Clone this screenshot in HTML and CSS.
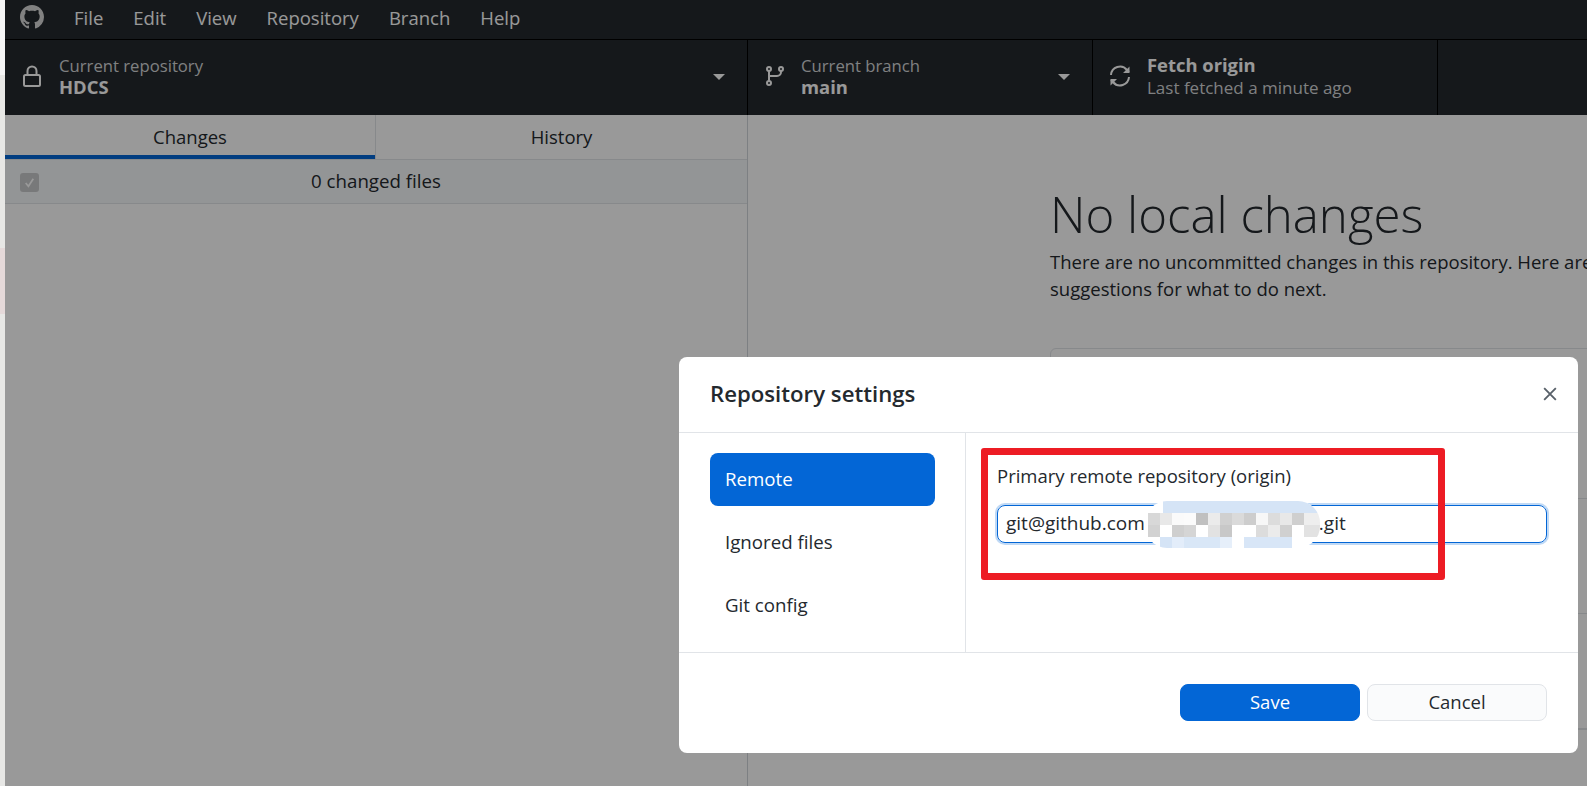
FILE: index.html
```html
<!DOCTYPE html>
<html lang="en">
<head>
<meta charset="utf-8">
<title>GitHub Desktop</title>
<link rel="stylesheet" href="styles.css">
</head>
<body>
<div class="strip"><div class="strip-pink"></div></div>
<div class="app">
  <header class="titlebar">
    <svg class="logo" viewBox="0 0 16 16"><path fill="currentColor" d="M8 0C3.58 0 0 3.58 0 8c0 3.54 2.29 6.53 5.47 7.59.4.07.55-.17.55-.38 0-.19-.01-.82-.01-1.49-2.01.37-2.53-.49-2.69-.94-.09-.23-.48-.94-.82-1.13-.28-.15-.68-.52-.01-.53.63-.01 1.08.58 1.23.82.72 1.21 1.87.87 2.33.66.07-.52.28-.87.51-1.07-1.78-.2-3.64-.89-3.64-3.95 0-.87.31-1.59.82-2.15-.08-.2-.36-1.02.08-2.12 0 0 .67-.21 2.2.82.64-.18 1.32-.27 2-.27s1.36.09 2 .27c1.53-1.04 2.2-.82 2.2-.82.44 1.1.16 1.92.08 2.12.51.56.82 1.27.82 2.15 0 3.07-1.87 3.75-3.65 3.95.29.25.54.73.54 1.48 0 1.07-.01 1.93-.01 2.2 0 .21.15.46.55.38A8.01 8.01 0 0 0 16 8c0-4.42-3.58-8-8-8z"/></svg>
    <nav class="menu">
      <span>File</span><span>Edit</span><span>View</span><span>Repository</span><span>Branch</span><span>Help</span>
    </nav>
  </header>
  <div class="toolbar">
    <div class="tool tool-repo">
      <svg class="ico ico-lock" viewBox="0 0 18 22" fill="none" stroke="currentColor" stroke-width="2"><rect x="1" y="10" width="16" height="11" rx="1.5"/><path d="M4.5 10V6a4.5 4.5 0 0 1 9 0v4"/></svg>
      <div class="tool-text"><div class="tool-sub">Current repository</div><div class="tool-main">HDCS</div></div>
      <i class="caret"></i>
    </div>
    <div class="tool tool-branch">
      <svg class="ico ico-branch" viewBox="0 0 18 20" fill="none" stroke="currentColor" stroke-width="2"><circle cx="3" cy="3" r="2"/><circle cx="15" cy="3" r="2"/><circle cx="3" cy="17" r="2"/><path d="M3 5v10M15 5v1a4 4 0 0 1-4 4H3"/></svg>
      <div class="tool-text"><div class="tool-sub">Current branch</div><div class="tool-main">main</div></div>
      <i class="caret"></i>
    </div>
    <div class="tool tool-fetch">
      <svg class="ico ico-sync" viewBox="0 0 22 22" fill="none" stroke="currentColor" stroke-width="2"><path d="M2 10a9 9 0 0 1 16-5l2 2"/><path d="M20 12a9 9 0 0 1-16 5l-2-2"/><path d="M20.500 1.500v6.500h-6.500M1.500 20.500v-6.500h6.500" fill="currentColor" stroke="none"/></svg>
      <div class="tool-text"><div class="tool-main">Fetch origin</div><div class="tool-sub tool-sub-last">Last fetched a minute ago</div></div>
    </div>
  </div>
  <main class="content">
    <aside class="left">
      <div class="tabs">
        <div class="tab tab-on">Changes</div>
        <div class="tab">History</div>
      </div>
      <div class="files">
        <span class="check"><svg viewBox="0 0 12 12"><path d="M2.500 6.500l2.500 3 4.500-7" fill="none" stroke="currentColor" stroke-width="1.600"/></svg></span>
        <span class="files-label">0 changed files</span>
      </div>
    </aside>
    <section class="right">
      <h1>No local changes</h1>
      <p>There are no uncommitted changes in this repository. Here are<br>suggestions for what to do next.</p>
      <div class="card"><div class="card-row card-row-first"></div><div class="card-row"></div><div class="card-row"></div></div>
    </section>
  </main>
</div>
<div class="scrim"></div>
<div class="dialog">
  <div class="dialog-head">
    <h2>Repository settings</h2>
    <svg class="close" viewBox="0 0 12 12"><path d="M1 1l10 10M11 1L1 11" stroke="currentColor" stroke-width="1.600" fill="none"/></svg>
  </div>
  <div class="dialog-body">
    <ul class="side">
      <li class="side-on">Remote</li>
      <li>Ignored files</li>
      <li>Git config</li>
    </ul>
    <div class="pane">
      <label class="field-label">Primary remote repository (origin)</label>
      <div class="input">git@github.com<span class="input-gap"></span>.git</div>
    </div>
  </div>
  <div class="dialog-foot">
    <button class="btn btn-save">Save</button>
    <button class="btn btn-cancel">Cancel</button>
  </div>
  <div class="redbox"></div>
  <svg class="mosaic" viewBox="0 0 180 48" shape-rendering="crispEdges">
    <defs><clipPath id="pill"><rect x="0" y="0" width="175" height="47" rx="22"/></clipPath></defs>
    <g clip-path="url(#pill)">
      <rect width="180" height="48" fill="#fff"/>
      <rect x="18" y="0" width="160" height="12" fill="#d5e4f6"/>
      <rect x="3" y="12" width="12" height="12" fill="#d8d8d8"/><rect x="15" y="12" width="12" height="12" fill="#e8e8e8"/><rect x="27" y="12" width="12" height="12" fill="#fafafa"/><rect x="39" y="12" width="12" height="12" fill="#fbfbfb"/><rect x="51" y="12" width="12" height="12" fill="#c0c0c0"/><rect x="63" y="12" width="12" height="12" fill="#ebebeb"/><rect x="75" y="12" width="12" height="12" fill="#d0d0d0"/><rect x="87" y="12" width="12" height="12" fill="#dadada"/><rect x="99" y="12" width="12" height="12" fill="#cdcdcd"/><rect x="111" y="12" width="12" height="12" fill="#f7f7f7"/><rect x="123" y="12" width="12" height="12" fill="#dcdcdc"/><rect x="135" y="12" width="12" height="12" fill="#e8e8e8"/><rect x="147" y="12" width="12" height="12" fill="#cfcfcf"/><rect x="159" y="12" width="19" height="12" fill="#eeeeee"/>
      <rect x="3" y="24" width="12" height="12" fill="#d2d2d2"/><rect x="27" y="24" width="12" height="12" fill="#cfcfcf"/><rect x="39" y="24" width="12" height="12" fill="#d5d5d5"/><rect x="63" y="24" width="12" height="12" fill="#e2e2e2"/><rect x="75" y="24" width="12" height="12" fill="#c8c8c8"/><rect x="111" y="24" width="12" height="12" fill="#dcdcdc"/><rect x="123" y="24" width="12" height="12" fill="#ebebeb"/><rect x="135" y="24" width="12" height="12" fill="#d0d0d0"/><rect x="159" y="24" width="19" height="12" fill="#e2e2e2"/>
      <rect x="15" y="36" width="12" height="12" fill="#d5e4f6"/><rect x="27" y="36" width="12" height="12" fill="#e3edfa"/><rect x="39" y="36" width="36" height="12" fill="#d9e7f7"/><rect x="75" y="36" width="12" height="12" fill="#e6effa"/><rect x="99" y="36" width="48" height="12" fill="#d8e6f7"/>
    </g>
  </svg>
</div>
</body>
</html>
```
FILE: styles.css
```css
* { box-sizing: border-box; }
html, body { margin: 0; height: 100%; overflow: hidden; }
body { font-family: "Open Sans", "Noto Sans", sans-serif; background: #fff; position: relative; }
.strip { position: absolute; left: 0; top: 0; bottom: 0; width: 5px; background: linear-gradient(#f5f5f5 0, #f5f5f5 75px, #e7e7e5 75px); }
.strip-pink { position: absolute; left: 0; right: 0; top: 248px; height: 66px; background: #e5d9d9; }
.app { margin-left: 5px; height: 786px; display: flex; flex-direction: column; background: #fff; }
.titlebar { height: 40px; background: #24292e; border-bottom: 1px solid #000; display: flex; align-items: center; color: #fff; padding: 0 0 5px 15px; flex: none; }
.logo { width: 24px; height: 24px; color: #d8d8d8; }
.menu { display: flex; margin-left: 30px; font-size: 18.500px; color: #fff; gap: 30px; }
.toolbar { height: 75px; background: #24292e; display: flex; flex: none; color: #fff; }
.tool { height: 75px; display: flex; align-items: center; border-right: 1px solid #000; position: relative; flex: none; padding-bottom: 4px; }
.tool-repo { width: 743px; padding-left: 18px; }
.tool-branch { width: 345px; padding-left: 18px; }
.tool-fetch { width: 345px; padding-left: 16px; }
.ico { color: #fff; flex: none; }
.ico-lock { width: 18px; height: 22px; margin-right: 18px; }
.ico-branch { width: 18px; height: 20px; margin-right: 17px; }
.ico-sync { width: 22px; height: 22px; margin-right: 16px; }
.tool-text { display: flex; flex-direction: column; line-height: 21px; }
.tool-sub { color: #d4d6d8; font-size: 16.700px; }
.tool-sub-last { font-size: 17px; margin-top: 2px; }
.tool-main { font-weight: 700; color: #fff; font-size: 18.400px; }
.caret { position: absolute; right: 22px; top: 34px; width: 0; height: 0; border-left: 6px solid transparent; border-right: 6px solid transparent; border-top: 6px solid #fff; }
.content { flex: 1; display: flex; min-height: 0; }
.left { width: 743px; border-right: 1px solid #d1d5da; flex: none; background: #fff; }
.tabs { display: flex; height: 45px; border-bottom: 1px solid #e1e4e8; }
.tab { flex: 1; display: flex; align-items: center; justify-content: center; font-size: 18.500px; color: #24292e; border-left: 1px solid #e1e4e8; padding-bottom: 1px; }
.tab-on { flex: none; width: 370px; border-left: none; border-bottom: 4px solid #0366d6; height: 44px; padding: 2px 0 0; }
.files { height: 44px; display: flex; align-items: center; position: relative; background: #f6f8fa; border-bottom: 1px solid #e1e4e8; justify-content: center; font-size: 18.700px; color: #24292e; padding-bottom: 2px; }
.check { position: absolute; left: 15px; top: 13px; width: 19px; height: 19px; background: #c8cacc; border-radius: 3px; color: #fff; display: flex; padding: 3px; }
.right { flex: 1; padding: 66px 0 0 302px; background: #fff; color: #24292e; overflow: hidden; }
.right h1 { margin: 0; font-size: 49.200px; font-weight: 300; line-height: 66px; white-space: nowrap; }
.right p { margin: 1px 0 0; font-size: 18.500px; line-height: 27px; white-space: nowrap; }
.card { margin-top: 46px; width: 700px; height: 382px; border: 1px solid #e1e4e8; border-radius: 6px; }
.card-row { height: 115px; border-bottom: 1px solid #e1e4e8; }
.card-row-first { height: 150px; }
.scrim { position: absolute; left: 5px; top: 0; right: 0; bottom: 0; background: rgba(0,0,0,.4); }
.dialog { position: absolute; left: 679px; top: 357px; width: 899px; height: 396px; background: #fff; border-radius: 8px; display: flex; flex-direction: column; color: #24292e; }
.dialog-head { height: 76px; border-bottom: 1px solid #e1e4e8; display: flex; align-items: center; justify-content: space-between; padding: 0 21px 2px 31px; flex: none; }
.dialog-head h2 { margin: 0; font-size: 22.200px; font-weight: 600; }
.close { width: 14px; height: 14px; color: #586069; }
.dialog-body { height: 220px; display: flex; border-bottom: 1px solid #e1e4e8; flex: none; }
.side { list-style: none; margin: 0; padding: 20px 30px 0 31px; width: 287px; border-right: 1px solid #e1e4e8; display: flex; flex-direction: column; gap: 10px; flex: none; }
.side li { height: 53px; padding: 0 0 2px 15px; display: flex; align-items: center; font-size: 18.700px; border-radius: 8px; }
.side .side-on { background: #0366d6; color: #fff; font-weight: 500; }
.pane { padding: 30px 31px 0 31px; flex: 1; display: flex; flex-direction: column; }
.field-label { font-size: 18.500px; line-height: 26px; }
.input { margin-top: 16px; height: 38px; border: 1px solid #0366d6; border-radius: 8px; box-shadow: 0 0 0 2px rgba(3,102,214,.25); font-size: 19px; display: flex; align-items: center; padding: 0 0 2px 8px; }
.input-gap { width: 174px; flex: none; }
.dialog-foot { flex: 1; display: flex; justify-content: flex-end; padding: 31px 31px 0 0; gap: 7px; }
.btn { width: 180px; height: 37px; border-radius: 8px; font: inherit; font-size: 18.500px; border: 1px solid #e1e4e8; line-height: 1; }
.btn-save { background: #0366d6; color: #fff; border-color: #0366d6; font-weight: 500; }
.btn-cancel { background: #fafbfc; color: #24292e; }
.redbox { position: absolute; left: 302px; top: 91px; width: 464px; height: 132px; border: 7px solid #ed1c24; border-radius: 3px; }
.mosaic { position: absolute; left: 466px; top: 144px; width: 180px; height: 48px; }
```
